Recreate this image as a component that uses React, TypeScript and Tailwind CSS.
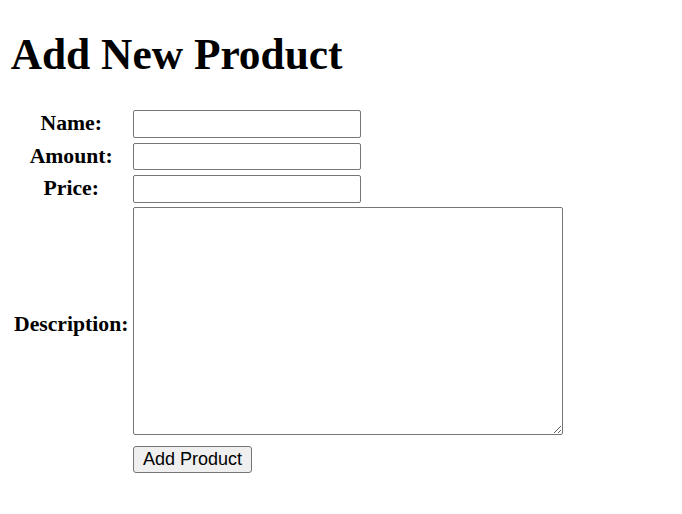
import React from 'react';

const fieldClass =
  "box-border w-[228px] h-[27.5px] border border-[#767676] rounded-[2px] bg-white px-[2px] font-['Liberation_Sans',Arial,sans-serif] text-[18px] align-middle";

const App = () => {
  return (
    <div className="bg-white px-[10.67px] pt-[28.6px] pb-[10px] font-['Liberation_Serif','Times_New_Roman',serif] text-[21.7px] leading-[normal] text-black">
      <h1 className="mb-[28.2px] text-[43.4px] font-bold leading-[normal]">Add New Product</h1>

      <form onSubmit={(e) => e.preventDefault()}>
        <table className="border-separate border-spacing-[2.67px]">
          <tbody>
            <tr>
              <th className="p-[1.33px] text-center align-middle font-bold">Name:</th>
              <td className="p-[1.33px]">
                <input type="text" className={fieldClass} />
              </td>
            </tr>
            <tr>
              <th className="p-[1.33px] text-center align-middle font-bold">Amount:</th>
              <td className="p-[1.33px]">
                <input type="text" className={fieldClass} />
              </td>
            </tr>
            <tr>
              <th className="p-[1.33px] text-center align-middle font-bold">Price:</th>
              <td className="p-[1.33px]">
                <input type="text" className={fieldClass} />
              </td>
            </tr>
            <tr>
              <th className="p-[1.33px] text-center align-middle font-bold">Description:</th>
              <td className="p-[1.33px] leading-[0]">
                <textarea className="box-border w-[430px] h-[228px] border border-[#767676] rounded-[2px] bg-white p-[2px] font-['Liberation_Mono',monospace] text-[18px] leading-[normal] mb-[5.7px]" />
              </td>
            </tr>
            <tr>
              <td className="p-[1.33px]" />
              <td className="p-[1.33px]">
                <button
                  type="submit"
                  className="box-border h-[27.5px] w-[119px] border border-[#767676] rounded-[3px] bg-[#efefef] font-['Liberation_Sans',Arial,sans-serif] text-[18px] leading-none text-black"
                >
                  Add Product
                </button>
              </td>
            </tr>
          </tbody>
        </table>
      </form>
    </div>
  );
};

export default App;
